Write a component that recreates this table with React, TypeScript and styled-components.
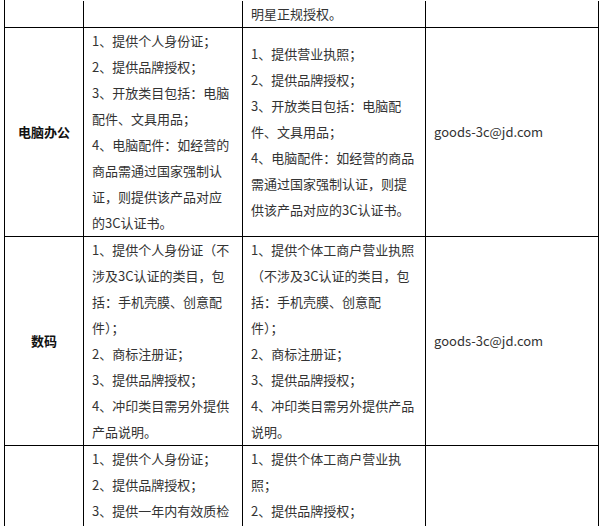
import { ReactNode } from 'react';
import styled, { createGlobalStyle } from 'styled-components';

const GlobalStyle = createGlobalStyle`
  *, *::before, *::after {
    box-sizing: border-box;
  }
  html, body {
    margin: 0;
    padding: 0;
    background-color: #fff;
  }
  body {
    font-family: "Noto Sans CJK SC", "Noto Sans", sans-serif;
  }
`;

const COLUMNS = '79px 159px 183px 173px';

const StyledTable = styled.div`
  width: 595px;
  margin-left: 4px;
  padding-top: 1px;
  border-left: 1px solid #000;
  font-size: 13px;
  color: #333;
`;

type CommonRowProps = {
  $columns: string;
};
const StyledRow = styled.div<CommonRowProps>`
  display: grid;
  grid-template-columns: ${(props) => props.$columns};
  align-items: stretch;
  border-bottom: 1px solid #000;
`;

type CellProps = {
  $centered?: boolean;
};
const Cell = styled.div<CellProps>`
  display: flex;
  flex-direction: column;
  justify-content: center;
  align-items: ${(props) => (props.$centered ? 'center' : 'flex-start')};
  padding: 0 8px;
  border-right: 1px solid #000;
  line-height: 26px;
  min-height: 26px;
`;

const Category = styled.span`
  font-weight: 700;
  color: #111;
`;

const Line = styled.span`
  display: block;
  white-space: nowrap;
`;

const Email = styled.span`
  white-space: nowrap;
`;

type RequirementRow = {
  category?: string;
  personal: string[];
  company: string[];
  email?: string;
};

const rows: RequirementRow[] = [
  {
    personal: [],
    company: ['明星正规授权。'],
  },
  {
    category: '电脑办公',
    personal: [
      '1、提供个人身份证；',
      '2、提供品牌授权；',
      '3、开放类目包括：电脑',
      '配件、文具用品；',
      '4、电脑配件：如经营的',
      '商品需通过国家强制认',
      '证，则提供该产品对应',
      '的3C认证书。',
    ],
    company: [
      '1、提供营业执照；',
      '2、提供品牌授权；',
      '3、开放类目包括：电脑配',
      '件、文具用品；',
      '4、电脑配件：如经营的商品',
      '需通过国家强制认证，则提',
      '供该产品对应的3C认证书。',
    ],
    email: 'goods-3c@jd.com',
  },
  {
    category: '数码',
    personal: [
      '1、提供个人身份证（不',
      '涉及3C认证的类目，包',
      '括：手机壳膜、创意配',
      '件）；',
      '2、商标注册证；',
      '3、提供品牌授权；',
      '4、冲印类目需另外提供',
      '产品说明。',
    ],
    company: [
      '1、提供个体工商户营业执照',
      '（不涉及3C认证的类目，包',
      '括：手机壳膜、创意配',
      '件）；',
      '2、商标注册证；',
      '3、提供品牌授权；',
      '4、冲印类目需另外提供产品',
      '说明。',
    ],
    email: 'goods-3c@jd.com',
  },
  {
    category: '家用电器',
    personal: [
      '1、提供个人身份证；',
      '2、提供品牌授权；',
      '3、提供一年内有效质检',
      '报告；',
      '4、开放类目包括：生活',
      '电器、个护健康；',
      '5、不开放大家电类目。',
    ],
    company: [
      '1、提供个体工商户营业执',
      '照；',
      '2、提供品牌授权；',
      '3、提供一年内有效质检报',
      '告；',
      '4、开放类目包括：生活电',
      '器、个护健康。',
    ],
    email: 'goods-3c@jd.com',
  },
];

type TableProps = {
  children: ReactNode;
};
function Table({ children }: TableProps) {
  return <StyledTable role="table">{children}</StyledTable>;
}

type RowProps = {
  children: ReactNode;
};
function Row({ children }: RowProps) {
  return (
    <StyledRow role="row" $columns={COLUMNS}>
      {children}
    </StyledRow>
  );
}

function Lines({ items }: { items: string[] }) {
  return (
    <>
      {items.map((text, idx) => (
        <Line key={idx}>{text}</Line>
      ))}
    </>
  );
}

Table.Row = Row;

export default function App() {
  return (
    <>
      <GlobalStyle />
      <Table>
        {rows.map((row, idx) => (
          <Table.Row key={idx}>
            <Cell $centered>{row.category && <Category>{row.category}</Category>}</Cell>
            <Cell>
              <Lines items={row.personal} />
            </Cell>
            <Cell>
              <Lines items={row.company} />
            </Cell>
            <Cell>{row.email && <Email>{row.email}</Email>}</Cell>
          </Table.Row>
        ))}
      </Table>
    </>
  );
}
